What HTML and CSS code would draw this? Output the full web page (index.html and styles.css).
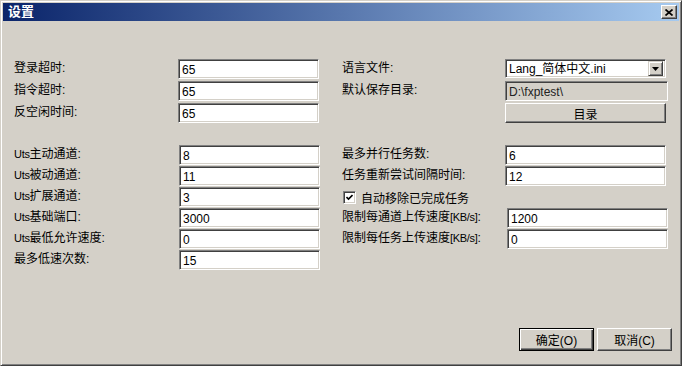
FILE: index.html
```html
<!DOCTYPE html>
<html lang="zh-CN">
<head>
    <meta charset="UTF-8">
    <title>设置</title>
    <link rel="stylesheet" href="styles.css">
</head>
<body>
    <div class="window">
        <div class="titlebar">
            <span class="title">设置</span>
            <span class="close-btn">
                <svg width="8" height="7" viewBox="0 0 8 7"><path d="M0.5 0.5L7.5 6.5M7.5 0.5L0.5 6.5" stroke="#000" stroke-width="1.7"/></svg>
            </span>
        </div>

        <div class="content">
            <div class="group group-top">
                <div class="col col-left">
                    <div class="row"><label>登录超时:</label><input class="field" value="65"></div>
                    <div class="row"><label>指令超时:</label><input class="field" value="65"></div>
                    <div class="row"><label>反空闲时间:</label><input class="field" value="65"></div>
                </div>
                <div class="col col-right">
                    <div class="row">
                        <label>语言文件:</label>
                        <div class="combo">
                            <span class="combo-text">Lang_简体中文.ini</span>
                            <span class="combo-arrow">
                                <svg width="7" height="4" viewBox="0 0 7 4"><path d="M0 0h7L3.5 4z" fill="#000"/></svg>
                            </span>
                        </div>
                    </div>
                    <div class="row"><label>默认保存目录:</label><div class="field field-disabled">D:\fxptest\</div></div>
                    <div class="row"><label></label><button class="btn btn-wide">目录</button></div>
                </div>
            </div>

            <div class="group group-bottom">
                <div class="col col-left">
                    <div class="row"><label><small>Uts</small>主动通道:</label><input class="field" value="8"></div>
                    <div class="row"><label><small>Uts</small>被动通道:</label><input class="field" value="11"></div>
                    <div class="row"><label><small>Uts</small>扩展通道:</label><input class="field" value="3"></div>
                    <div class="row"><label><small>Uts</small>基础端口:</label><input class="field" value="3000"></div>
                    <div class="row"><label><small>Uts</small>最低允许速度:</label><input class="field" value="0"></div>
                    <div class="row"><label>最多低速次数:</label><input class="field" value="15"></div>
                </div>
                <div class="col col-right">
                    <div class="row"><label>最多并行任务数:</label><input class="field" value="6"></div>
                    <div class="row"><label>任务重新尝试间隔时间:</label><input class="field" value="12"></div>
                    <div class="row row-check">
                        <span class="checkbox">
                            <svg width="7" height="7" viewBox="0 0 7 7"><path d="M0.5 3L2.5 5L6.5 1" stroke="#000" stroke-width="1.6" fill="none"/></svg>
                        </span>
                        <span>自动移除已完成任务</span>
                    </div>
                    <div class="row row-shift"><label>限制每通道上传速度<small>[KB/s]</small>:</label><input class="field" value="1200"></div>
                    <div class="row row-shift"><label>限制每任务上传速度<small>[KB/s]</small>:</label><input class="field" value="0"></div>
                </div>
            </div>

            <div class="footer">
                <button class="btn btn-default">确定(O)</button>
                <button class="btn">取消(C)</button>
            </div>
        </div>
    </div>
</body>
</html>
```

FILE: styles.css
```css
body {
    margin: 0;
    background-color: #d4d0c8;
    font-family: "Liberation Sans", "Noto Sans CJK SC", sans-serif;
    font-size: 12px;
    color: #000;
}

.window {
    box-sizing: border-box;
    width: 682px;
    height: 366px;
    padding: 2px;
    border: 1px solid;
    border-color: #d4d0c8 #404040 #404040 #d4d0c8;
    box-shadow: inset 1px 1px #fff, inset -1px -1px #808080;
    background-color: #d4d0c8;
    display: flex;
    flex-direction: column;
}

.titlebar {
    height: 18px;
    display: flex;
    align-items: center;
    justify-content: space-between;
    padding: 0 2px 0 5px;
    background: linear-gradient(to right, #0a246a, #a6caf0);
}

.title {
    color: #fff;
    font-weight: bold;
    font-size: 13px;
    line-height: 14px;
}

.close-btn {
    box-sizing: border-box;
    width: 16px;
    height: 14px;
    display: flex;
    align-items: center;
    justify-content: center;
    background-color: #d4d0c8;
    border: 1px solid;
    border-color: #fff #404040 #404040 #fff;
    box-shadow: inset -1px -1px #808080;
}

.content {
    flex: 1;
    display: flex;
    flex-direction: column;
    padding: 0 7px 0 11px;
}

.group {
    display: flex;
}

.group-top {
    margin-top: 38px;
}

.group-top .row {
    margin-bottom: 2px;
}

.group-bottom {
    margin-top: 20px;
}

.col-left {
    width: 328px;
}

.row {
    display: flex;
    align-items: flex-start;
    height: 20px;
    margin-bottom: 1px;
}

.row label {
    line-height: 14px;
    padding-top: 2px;
}

.col-left label {
    width: 164px;
}

.group-bottom .col-left label {
    width: 165px;
}

.col-right label {
    width: 163px;
}

.row label small {
    font-size: 11px;
    letter-spacing: -0.3px;
}

.field {
    box-sizing: border-box;
    width: 141px;
    height: 20px;
    margin: 0;
    padding: 1px 3px 0;
    border: 1px solid;
    border-color: #808080 #fff #fff #808080;
    box-shadow: inset 1px 1px #404040, inset -1px -1px #d4d0c8;
    background-color: #fff;
    font-family: inherit;
    font-size: 12px;
    line-height: 16px;
    outline: none;
}

.col-right .field {
    width: 161px;
}

.row-shift .field {
    margin-left: 2px;
}

.field-disabled {
    background-color: #d4d0c8;
    width: 163px !important;
    color: #222;
    padding-top: 2px;
}

.combo {
    box-sizing: border-box;
    width: 161px;
    height: 19px;
    display: flex;
    align-items: center;
    justify-content: space-between;
    border: 1px solid;
    border-color: #808080 #fff #fff #808080;
    box-shadow: inset 1px 1px #404040, inset -1px -1px #d4d0c8;
    background-color: #fff;
    padding: 2px;
}

.combo-text {
    padding-left: 1px;
    line-height: 14px;
}

.combo-arrow {
    box-sizing: border-box;
    width: 15px;
    height: 15px;
    display: flex;
    align-items: center;
    justify-content: center;
    background-color: #d4d0c8;
    border: 1px solid;
    border-color: #d4d0c8 #404040 #404040 #d4d0c8;
    box-shadow: inset 1px 1px #fff, inset -1px -1px #808080;
}

.btn {
    box-sizing: border-box;
    width: 75px;
    height: 23px;
    margin: 0;
    padding: 0;
    border: 1px solid;
    border-color: #fff #404040 #404040 #fff;
    box-shadow: inset -1px -1px #808080;
    background-color: #d4d0c8;
    font-family: inherit;
    font-size: 12px;
    color: #000;
}

.btn-wide {
    width: 161px;
    height: 20px;
}

.btn-default {
    border: 1px solid #000;
    box-shadow: inset 1px 1px #fff, inset -1px -1px #404040, inset -2px -2px #808080;
}

.row-check {
    align-items: center;
    gap: 5px;
    padding-left: 1px;
}

.checkbox {
    box-sizing: border-box;
    width: 13px;
    height: 13px;
    display: flex;
    align-items: center;
    justify-content: center;
    background-color: #fff;
    border: 1px solid;
    border-color: #808080 #fff #fff #808080;
    box-shadow: inset 1px 1px #404040, inset -1px -1px #d4d0c8;
}

.footer {
    display: flex;
    justify-content: flex-end;
    gap: 3px;
    margin-top: 57px;
}
```
